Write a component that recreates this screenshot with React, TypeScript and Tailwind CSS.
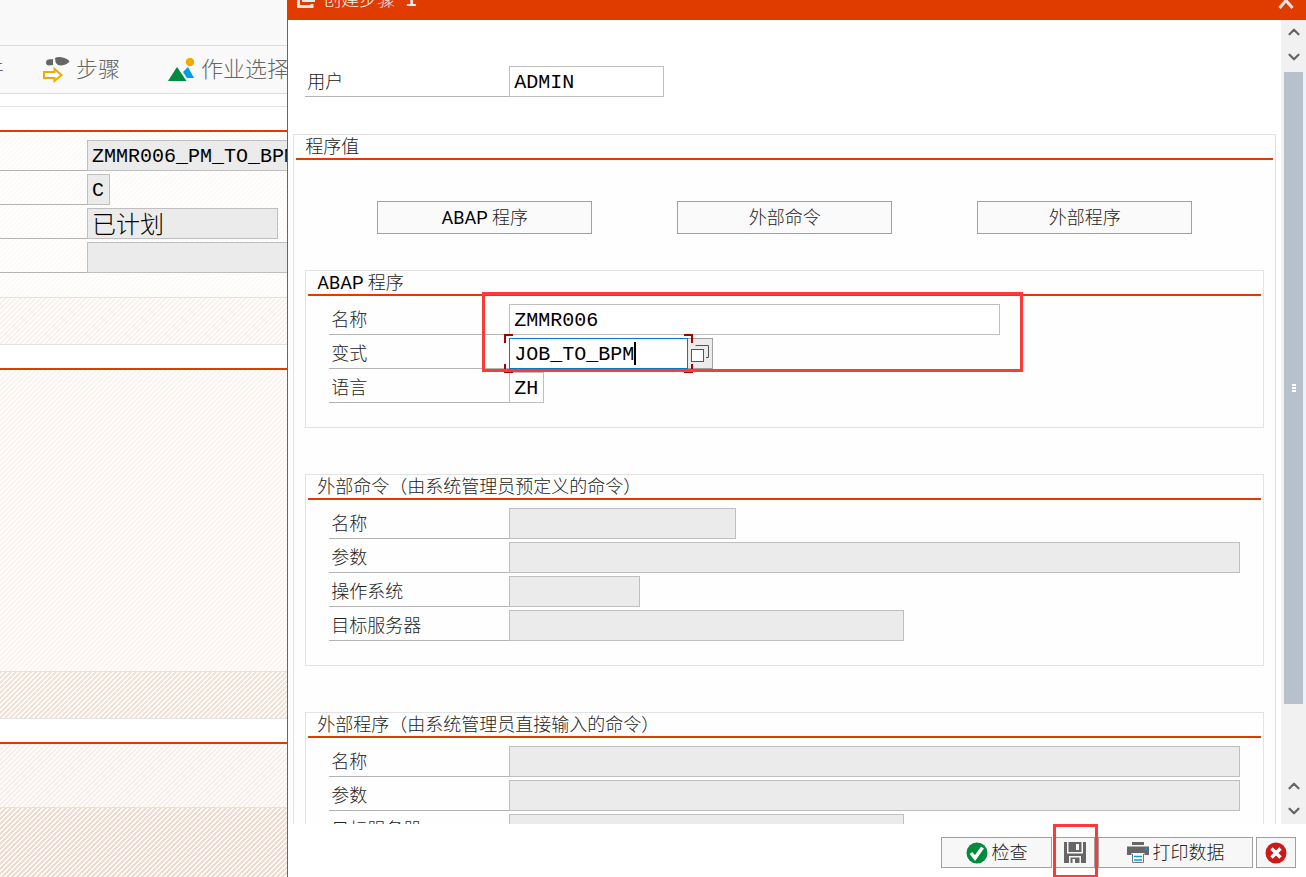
import React from 'react'
import { ChevronDown, ChevronUp } from 'lucide-react'

interface FieldProps {
  id: string
  label: string
  value?: string
  width: string
  labelWidth?: string
  textStyle?: string
  disabled?: boolean
}

const inputBase = 'h-[31px] min-w-0 border px-1 font-[Liberation_Mono,Noto_Sans_CJK_SC,monospace] text-black outline-none'

function FieldLabel({ id, label, width = 'w-[180px]' }: { id: string; label: string; width?: string }) {
  return (
    <label htmlFor={id} className={`flex h-[31px] shrink-0 items-center border-b border-[#b4b4b4] pt-0.5 pl-0.5 ${width}`}>
      {label}
    </label>
  )
}

function Field({ id, label, value = '', width, labelWidth, textStyle = 'pt-0.5 text-[20px]', disabled = false }: FieldProps) {
  return (
    <div className="flex">
      <FieldLabel id={id} label={label} width={labelWidth} />
      <input
        id={id}
        type="text"
        defaultValue={value}
        disabled={disabled}
        className={`${inputBase} ${textStyle} border-[#bfbfbf] ${disabled ? 'bg-[#ebebeb]' : 'bg-white'} ${width}`}
      />
    </div>
  )
}

function Group({ title, className = '', children }: { title: React.ReactNode; className?: string; children: React.ReactNode }) {
  return (
    <section className={`border border-[#e3e3e3] px-0.5 ${className}`}>
      <h3 className="h-[25px] border-b-2 border-[#e03c00] pl-[9px] leading-[24px]">{title}</h3>
      <div className="flex flex-col gap-[3px] px-[21px] pt-2">{children}</div>
    </section>
  )
}

function StepIcon() {
  return (
    <svg width="28" height="26" viewBox="0 0 28 26" aria-hidden="true">
      <path d="M6 2.500 L11 2 V8 L7 8.500 Q4 8.500 4 5.500 Q4 3 6 2.500Z" fill="#666" />
      <path d="M13 1 Q14 0 18 0 Q26 1 27.500 4.500 Q25 8 19 8.500 Q15 8.500 13.500 5Z" fill="#666" />
      <path d="M2 15 H12.500 V12 L19.500 18 L12.500 24 V21 H2Z" fill="#fff" stroke="#f0ab00" strokeWidth="2" />
    </svg>
  )
}

function SelectionIcon() {
  return (
    <svg width="27" height="24" viewBox="0 0 27 24" aria-hidden="true">
      <circle cx="22" cy="4" r="4.200" fill="#f0ab00" />
      <path d="M15 14 L20 9 L26 20 H19Z" fill="#009de0" />
      <path d="M0 23 L9 9 L18.500 23Z" fill="#008a3b" />
    </svg>
  )
}

function WindowIcon() {
  return (
    <svg width="18" height="18" viewBox="0 0 18 18" aria-hidden="true">
      <path d="M1.500 2 V15.500 H15 V13" fill="none" stroke="#e6e6e6" strokeWidth="3" />
      <path d="M5 0 H18 V11 H5Z" fill="#e6e6e6" />
    </svg>
  )
}

function ValueHelpIcon() {
  return (
    <svg width="20" height="20" viewBox="0 0 20 20" aria-hidden="true">
      <path d="M5.500 1.500 H18.500 V13.500 H16" fill="none" stroke="#555" />
      <rect x="1.500" y="5.500" width="12" height="12" fill="#fff" stroke="#555" />
    </svg>
  )
}

function CheckIcon() {
  return (
    <svg width="22" height="22" viewBox="0 0 22 22" aria-hidden="true">
      <circle cx="11" cy="11" r="10.500" fill="#008a3b" />
      <path d="M5 11 L9 16 L16.500 5.500" fill="none" stroke="#fff" strokeWidth="3.500" />
    </svg>
  )
}

function SaveIcon() {
  return (
    <svg width="22" height="21" viewBox="0 0 22 21" aria-hidden="true">
      <path d="M0 0 H22 V21 H0Z" fill="#666" />
      <path d="M3 0 H4.500 V10 H17.500 V0 H19 V11.500 H3Z" fill="#f7f7f7" />
      <path d="M12 2 H15 V8 H12Z" fill="#f7f7f7" />
      <path d="M5 14 H17 V21 H15.500 V15.500 H6.500 V21 H5Z" fill="#f7f7f7" />
      <path d="M8.500 17 H11 V21 H8.500Z" fill="#f7f7f7" />
    </svg>
  )
}

function PrintIcon() {
  return (
    <svg width="22" height="22" viewBox="0 0 22 22" aria-hidden="true">
      <path d="M5 0 H17 V3 H5Z" fill="#666" />
      <path d="M0 4.500 H22 V13 H17.500 V11 H4.500 V13 H0Z" fill="#666" />
      <path d="M18 6 H20 V8 H18Z" fill="#009de0" />
      <path d="M5.500 12 V20.500 H16.500 V12" fill="#fff" stroke="#777" />
      <path d="M7 14.500 H15 M7 18 H15" stroke="#009de0" strokeWidth="1.500" />
    </svg>
  )
}

function CancelIcon() {
  return (
    <svg width="22" height="22" viewBox="0 0 22 22" aria-hidden="true">
      <circle cx="11" cy="11" r="10.500" fill="#cc1919" />
      <path d="M6.500 6.500 L15.500 15.500 M15.500 6.500 L6.500 15.500" stroke="#fff" strokeWidth="3.500" />
    </svg>
  )
}

const toolButton = 'flex items-center text-[22px] whitespace-nowrap text-[#666]'

function JobPane() {
  return (
    <aside className="flex w-[22%] flex-col overflow-hidden bg-white">
      <div className="h-[46px] shrink-0 border-b border-[#dcdcdc] bg-[#f9f9f9]" />
      <nav className="flex h-12 shrink-0 items-center border-b border-[#dcdcdc] bg-[#f9f9f9]">
        <button type="button" className="flex w-1 shrink-0 justify-end overflow-hidden text-[22px] text-[#666]">件</button>
        <button type="button" className={`${toolButton} ml-[38px] gap-1.5`}>
          <StepIcon />
          步骤
        </button>
        <button type="button" className={`${toolButton} ml-12 gap-1.5`}>
          <SelectionIcon />
          作业选择
        </button>
      </nav>
      <div className="h-[13px] shrink-0 border-b border-[#e3e3e3]" />
      <div className="h-[25px] shrink-0 border-b-2 border-[#e03c00]" />

      <div className="flex h-[166px] shrink-0 flex-col gap-[3px] border-b border-[#e3e3e3] bg-[linear-gradient(135deg,#fcf9f6_30%,#fff_30%,#fff_50%,#fcf9f6_50%,#fcf9f6_80%,#fff_80%)] bg-size-[5px_5px] pt-2">
        <Field id="job-name" label="" labelWidth="w-[87px]" value="ZMMR006_PM_TO_BPM" width="w-[400px] shrink-0" disabled />
        <Field id="job-class" label="" labelWidth="w-[87px]" value="C" width="w-[23px]" disabled />
        <Field id="job-status" label="" labelWidth="w-[87px]" value="已计划" width="w-[191px]" textStyle="pb-0.5 text-[24px]" disabled />
        <Field id="job-target" label="" labelWidth="w-[87px]" width="w-[400px] shrink-0" disabled />
      </div>
      <div className="h-[47px] shrink-0 border-b border-[#e3e3e3] bg-[linear-gradient(135deg,#fbf2ed_30%,#fff_30%,#fff_50%,#fbf2ed_50%,#fbf2ed_80%,#fff_80%)] bg-size-[5px_5px]" />
      <div className="h-[25px] shrink-0 border-b-2 border-[#e03c00]" />
      <div className="h-[302px] shrink-0 border-b border-[#e3e3e3] bg-[linear-gradient(135deg,#fbf4ef_30%,#fff_30%,#fff_50%,#fbf4ef_50%,#fbf4ef_80%,#fff_80%)] bg-size-[5px_5px]" />
      <div className="h-[47px] shrink-0 border-b border-[#e3e3e3] bg-[linear-gradient(135deg,#f5e2d7_30%,#fff_30%,#fff_50%,#f5e2d7_50%,#f5e2d7_80%,#fff_80%)] bg-size-[5px_5px]" />
      <div className="h-[25px] shrink-0 border-b-2 border-[#e03c00]" />
      <div className="h-16 shrink-0 border-b border-[#e3e3e3] bg-[linear-gradient(135deg,#fbefea_30%,#fff_30%,#fff_50%,#fbefea_50%,#fbefea_80%,#fff_80%)] bg-size-[5px_5px]" />
      <div className="flex-1 bg-[linear-gradient(135deg,#f3dbd0_30%,#fff_30%,#fff_50%,#f3dbd0_50%,#f3dbd0_80%,#fff_80%)] bg-size-[5px_5px]" />
    </aside>
  )
}

function ScrollBar() {
  const arrow = 'flex h-[25px] items-center justify-center pb-0.5 text-[#666]'
  return (
    <div className="flex w-[25px] shrink-0 flex-col bg-[#f1f1f1]">
      <button type="button" aria-label="向上" className={arrow}><ChevronUp size={18} strokeWidth={3} /></button>
      <button type="button" aria-label="向下" className={arrow}><ChevronDown size={18} strokeWidth={3} /></button>
      <div className="flex-1 px-[3px] pt-0.5">
        <div className="flex h-[90%] flex-col items-center justify-center gap-px bg-[#b7c1cb]">
          <span className="h-0.5 w-1 bg-white" />
          <span className="h-0.5 w-1 bg-white" />
          <span className="h-0.5 w-1 bg-white" />
        </div>
      </div>
      <button type="button" aria-label="向上" className={arrow}><ChevronUp size={18} strokeWidth={3} /></button>
      <button type="button" aria-label="向下" className={arrow}><ChevronDown size={18} strokeWidth={3} /></button>
    </div>
  )
}

function VariantField() {
  const corner = 'absolute size-[9px] border-[#a80000]'
  return (
    <div className="flex">
      <FieldLabel id="abap-variant" label="变式" />
      <div className="relative flex">
        <input
          id="abap-variant"
          type="text"
          defaultValue="JOB_TO_BPM"
          className={`${inputBase} w-[179px] border-[#007cc0] bg-white pt-0.5 text-[20px]`}
        />
        <span className="absolute top-1 left-[125px] h-[23px] w-0.5 bg-black" />
        <span className={`${corner} -top-1 -left-[5px] border-t-2 border-l-2`} />
        <span className={`${corner} -top-1 -right-[5px] z-10 border-t-2 border-r-2`} />
        <span className={`${corner} -bottom-1 -left-[5px] border-b-2 border-l-2`} />
        <span className={`${corner} -right-[5px] -bottom-1 z-10 border-r-2 border-b-2`} />
      </div>
      <button type="button" aria-label="值帮助" className="flex h-[31px] w-[25px] items-center justify-center border border-l-0 border-[#a0a0a0] bg-[#ebebeb]">
        <ValueHelpIcon />
      </button>
    </div>
  )
}

function AbapProgram() {
  return (
    <>
      <span className="font-normal text-black">ABAP</span> 程序
    </>
  )
}

const programTypes = [
  { id: 'abap', label: <AbapProgram /> },
  { id: 'command', label: '外部命令' },
  { id: 'external', label: '外部程序' }
]

const footerButton = 'flex h-[31px] items-center justify-center gap-1 border border-[#a0a0a0] bg-[#f7f7f7]'

function StepDialog() {
  return (
    <main className="flex min-w-0 flex-1 flex-col border-l border-[#e03c00] bg-white">
      <header className="flex h-5 shrink-0 flex-col justify-end overflow-hidden bg-[#e03c00]">
        <div className="flex h-10 shrink-0 items-center pr-3 pl-[9px] text-[#eee]">
          <WindowIcon />
          <h1 className="ml-2 flex-1">
            创建步骤 <span className="pl-1.5 font-[Liberation_Mono,monospace] font-bold">1</span>
          </h1>
          <button type="button" aria-label="关闭">
            <svg width="16" height="18" viewBox="0 0 16 18" aria-hidden="true">
              <path d="M1.500 2 L14.500 17 M14.500 2 L1.500 17" stroke="#e6e6e6" strokeWidth="3" />
            </svg>
          </button>
        </div>
      </header>

      <div className="flex min-h-0 flex-1">
        <div className="min-w-0 flex-1 overflow-hidden px-[5px]">
          <div className="pt-[46px] pl-3">
            <Field id="user" label="用户" value="ADMIN" labelWidth="w-[204px]" width="w-[155px]" />
          </div>

          <section className="mt-[37px] border border-[#e3e3e3] bg-[#fefefe] px-0.5">
            <h2 className="h-[25px] border-b-2 border-[#e03c00] pl-[9px] leading-[24px]">程序值</h2>
            <div className="flex gap-[85px] pt-[41px] pl-[81px]">
              {programTypes.map((type) => (
                <button key={type.id} type="button" className="h-[33px] w-[215px] border border-[#a0a0a0] bg-[#fafafa]">
                  {type.label}
                </button>
              ))}
            </div>

            <div className="px-[9px]">
              <div className="relative mt-9">
                <Group title={<AbapProgram />} className="h-[158px]">
                  <Field id="abap-name" label="名称" value="ZMMR006" width="w-[491px]" />
                  <VariantField />
                  <Field id="abap-lang" label="语言" value="ZH" width="w-[35px]" />
                </Group>
                <div className="pointer-events-none absolute top-[22px] left-[177px] z-20 h-20 w-[541px] border-3 border-[#fc3a38]" />
              </div>

              <Group title="外部命令（由系统管理员预定义的命令）" className="mt-[46px] h-48">
                <Field id="cmd-name" label="名称" width="w-[227px]" disabled />
                <Field id="cmd-param" label="参数" width="w-[731px]" disabled />
                <Field id="cmd-os" label="操作系统" width="w-[131px]" disabled />
                <Field id="cmd-server" label="目标服务器" width="w-[395px]" disabled />
              </Group>

              <Group title="外部程序（由系统管理员直接输入的命令）" className="mt-[46px] h-40">
                <Field id="prog-name" label="名称" width="w-[731px]" disabled />
                <Field id="prog-param" label="参数" width="w-[731px]" disabled />
                <Field id="prog-server" label="目标服务器" width="w-[395px]" disabled />
              </Group>
            </div>
          </section>
        </div>
        <ScrollBar />
      </div>

      <footer className="flex h-[53px] shrink-0 justify-end gap-[3px] pt-[13px] pr-2.5">
        <button type="button" className={`${footerButton} w-[111px]`}>
          <CheckIcon />
          检查
        </button>
        <div className="relative">
          <button type="button" aria-label="保存" className={`${footerButton} w-10`}>
            <SaveIcon />
          </button>
          <div className="pointer-events-none absolute -top-[13px] -left-0.5 h-[54px] w-[45px] border-3 border-[#fc3a38]" />
        </div>
        <button type="button" className={`${footerButton} w-[155px]`}>
          <PrintIcon />
          打印数据
        </button>
        <button type="button" aria-label="取消" className={`${footerButton} w-10`}>
          <CancelIcon />
        </button>
      </footer>
    </main>
  )
}

export default function App() {
  return (
    <div className="flex h-screen overflow-hidden font-[Roboto,Noto_Sans_CJK_SC,sans-serif] text-[18px] leading-6 font-light text-[#222]">
      <JobPane />
      <StepDialog />
    </div>
  )
}
